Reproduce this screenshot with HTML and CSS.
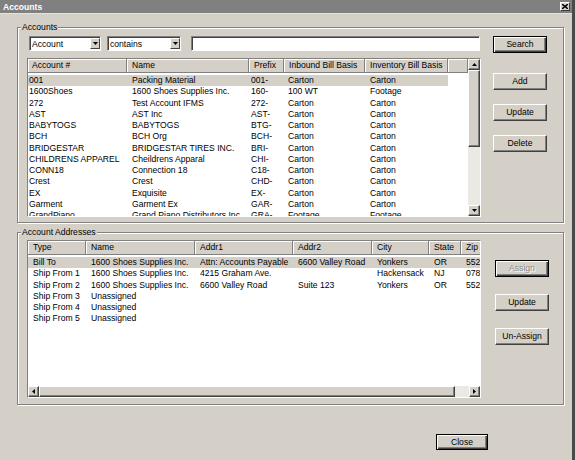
FILE: index.html
```html
<!DOCTYPE html>
<html lang="en">
  <head>
    <meta charset="UTF-8" />
    <title>Accounts</title>
    <link rel="stylesheet" href="styles.css">
  </head>
  <body>
    <div class="window">
      <div class="titlebar">
        <span>Accounts</span>
        <span class="close-box">
          <svg width="6" height="5" viewBox="0 0 6 5"><path d="M0 0L6 5M6 0L0 5" stroke="#000" stroke-width="1.4"/></svg>
        </span>
      </div>

      <div class="content">
        <!-- Accounts -->
        <div class="group accounts">
          <span class="group-label">Accounts</span>
          <div class="left">
            <div class="toolbar">
              <div class="combo combo-field">
                <span class="combo-text">Account</span>
                <span class="combo-btn"><svg width="5" height="3"><path d="M0 0h5L2.5 3z"/></svg></span>
              </div>
              <div class="combo combo-op">
                <span class="combo-text">contains</span>
                <span class="combo-btn"><svg width="5" height="3"><path d="M0 0h5L2.5 3z"/></svg></span>
              </div>
              <div class="textbox"></div>
            </div>

            <div class="grid accounts-grid">
              <div class="grid-main">
                <div class="grid-head">
                  <div class="hcell">Account #</div>
                  <div class="hcell">Name</div>
                  <div class="hcell">Prefix</div>
                  <div class="hcell">Inbound Bill Basis</div>
                  <div class="hcell">Inventory Bill Basis</div>
                  <div class="hcell filler"></div>
                </div>
                <div class="grid-body">
                  <div class="row selected"><div class="cell">001</div><div class="cell">Packing Material</div><div class="cell">001-</div><div class="cell">Carton</div><div class="cell">Carton</div></div>
                  <div class="row"><div class="cell">1600Shoes</div><div class="cell">1600 Shoes Supplies Inc.</div><div class="cell">160-</div><div class="cell">100 WT</div><div class="cell">Footage</div></div>
                  <div class="row"><div class="cell">272</div><div class="cell">Test Account IFMS</div><div class="cell">272-</div><div class="cell">Carton</div><div class="cell">Carton</div></div>
                  <div class="row"><div class="cell">AST</div><div class="cell">AST Inc</div><div class="cell">AST-</div><div class="cell">Carton</div><div class="cell">Carton</div></div>
                  <div class="row"><div class="cell">BABYTOGS</div><div class="cell">BABYTOGS</div><div class="cell">BTG-</div><div class="cell">Carton</div><div class="cell">Carton</div></div>
                  <div class="row"><div class="cell">BCH</div><div class="cell">BCH Org</div><div class="cell">BCH-</div><div class="cell">Carton</div><div class="cell">Carton</div></div>
                  <div class="row"><div class="cell">BRIDGESTAR</div><div class="cell">BRIDGESTAR TIRES INC.</div><div class="cell">BRI-</div><div class="cell">Carton</div><div class="cell">Carton</div></div>
                  <div class="row"><div class="cell">CHILDRENS APPAREL</div><div class="cell">Cheildrens Apparal</div><div class="cell">CHI-</div><div class="cell">Carton</div><div class="cell">Carton</div></div>
                  <div class="row"><div class="cell">CONN18</div><div class="cell">Connection 18</div><div class="cell">C18-</div><div class="cell">Carton</div><div class="cell">Carton</div></div>
                  <div class="row"><div class="cell">Crest</div><div class="cell">Crest</div><div class="cell">CHD-</div><div class="cell">Carton</div><div class="cell">Carton</div></div>
                  <div class="row"><div class="cell">EX</div><div class="cell">Exquisite</div><div class="cell">EX-</div><div class="cell">Carton</div><div class="cell">Carton</div></div>
                  <div class="row"><div class="cell">Garment</div><div class="cell">Garment Ex</div><div class="cell">GAR-</div><div class="cell">Carton</div><div class="cell">Carton</div></div>
                  <div class="row"><div class="cell">GrandPiano</div><div class="cell">Grand Piano Distributors Inc.</div><div class="cell">GRA-</div><div class="cell">Footage</div><div class="cell">Footage</div></div>
                </div>
              </div>
              <div class="vscroll">
                <span class="sb-btn"><svg width="5" height="3"><path d="M0 3h5L2.5 0z"/></svg></span>
                <span class="sb-thumb v-thumb"></span>
                <span class="sb-track"></span>
                <span class="sb-btn"><svg width="5" height="3"><path d="M0 0h5L2.5 3z"/></svg></span>
              </div>
            </div>
          </div>

          <div class="side">
            <div class="btn default">Search</div>
            <div class="btn btn-add">Add</div>
            <div class="btn btn-gap">Update</div>
            <div class="btn btn-gap">Delete</div>
          </div>
        </div>

        <!-- Account Addresses -->
        <div class="group addresses">
          <span class="group-label">Account Addresses</span>
          <div class="left">
            <div class="grid address-grid">
              <div class="grid-main">
                <div class="grid-head">
                  <div class="hcell">Type</div>
                  <div class="hcell">Name</div>
                  <div class="hcell">Addr1</div>
                  <div class="hcell">Addr2</div>
                  <div class="hcell">City</div>
                  <div class="hcell">State</div>
                  <div class="hcell">Zip</div>
                </div>
                <div class="grid-body">
                  <div class="row selected"><div class="cell">Bill To</div><div class="cell">1600 Shoes Supplies Inc.</div><div class="cell">Attn: Accounts Payable</div><div class="cell">6600 Valley Road</div><div class="cell">Yonkers</div><div class="cell">OR</div><div class="cell">552</div></div>
                  <div class="row"><div class="cell">Ship From 1</div><div class="cell">1600 Shoes Supplies Inc.</div><div class="cell">4215 Graham Ave.</div><div class="cell"></div><div class="cell">Hackensack</div><div class="cell">NJ</div><div class="cell">078</div></div>
                  <div class="row"><div class="cell">Ship From 2</div><div class="cell">1600 Shoes Supplies Inc.</div><div class="cell">6600 Valley Road</div><div class="cell">Suite 123</div><div class="cell">Yonkers</div><div class="cell">OR</div><div class="cell">552</div></div>
                  <div class="row"><div class="cell">Ship From 3</div><div class="cell">Unassigned</div></div>
                  <div class="row"><div class="cell">Ship From 4</div><div class="cell">Unassigned</div></div>
                  <div class="row"><div class="cell">Ship From 5</div><div class="cell">Unassigned</div></div>
                </div>
                <div class="hscroll">
                  <span class="sb-btn h-btn"><svg width="3" height="5"><path d="M3 0v5L0 2.5z"/></svg></span>
                  <span class="sb-thumb h-thumb"></span>
                  <span class="sb-track"></span>
                  <span class="sb-btn h-btn"><svg width="3" height="5"><path d="M0 0v5L3 2.5z"/></svg></span>
                </div>
              </div>
            </div>
          </div>

          <div class="side">
            <div class="btn default disabled btn-assign">Assign</div>
            <div class="btn btn-gap2">Update</div>
            <div class="btn btn-gap2">Un-Assign</div>
          </div>
        </div>

        <div class="footer">
          <div class="btn default btn-close">Close</div>
        </div>
      </div>
    </div>
  </body>
</html>
```

FILE: styles.css
```css
body {
  margin: 0;
  font-family: "Liberation Sans", Arial, sans-serif;
  font-size: 8.6px;
  color: #000;
}
.window {
  width: 575px;
  height: 460px;
  box-sizing: border-box;
  background: #d4d0c8;
  border-right: 3px solid #4a4a4a;
  display: flex;
  flex-direction: column;
  overflow: hidden;
}
.titlebar {
  height: 13px;
  background: #808080;
  color: #fff;
  font-weight: bold;
  display: flex;
  align-items: center;
  justify-content: space-between;
  padding: 0 2px 0 3px;
  border-bottom: 1px solid #e6e3dc;
}
.close-box {
  width: 10px;
  height: 9px;
  box-sizing: border-box;
  background: #d4d0c8;
  border: 1px solid;
  border-color: #fff #404040 #404040 #fff;
  display: flex;
  align-items: center;
  justify-content: center;
}
.content {
  flex: 1;
  padding: 13px 0 0 17px;
  display: flex;
  flex-direction: column;
}

/* group boxes */
.group {
  position: relative;
  width: 547px;
  box-sizing: border-box;
  border: 1px solid #808080;
  box-shadow: 1px 1px 0 #fff, inset 1px 1px 0 #fff;
  display: flex;
}
.group-label {
  position: absolute;
  top: -6px;
  left: 3px;
  padding: 0 1px;
  line-height: 11px;
  background: #d4d0c8;
}
.accounts {
  padding: 8px 0 5px 9px;
  gap: 12px;
}
.addresses {
  margin-top: 9px;
  padding: 7px 0 6px 9px;
  gap: 14px;
}
.left {
  width: 454px;
  display: flex;
  flex-direction: column;
}
.side {
  width: 54px;
  display: flex;
  flex-direction: column;
}

/* search row */
.toolbar {
  display: flex;
  height: 15px;
  margin-bottom: 7px;
  padding-left: 2px;
}
.combo,
.textbox {
  box-sizing: border-box;
  height: 15px;
  background: #fff;
  border: 1px solid;
  border-color: #808080 #fff #fff #808080;
  box-shadow: inset 1px 1px 0 #404040;
}
.combo {
  display: flex;
  align-items: flex-start;
}
.combo-field {
  width: 72px;
  margin-right: 6px;
}
.combo-op {
  width: 74px;
  margin-right: 10px;
}
.textbox {
  width: 289px;
}
.combo-text {
  flex: 1;
  padding: 1px 0 0 2px;
  line-height: 12px;
}
.combo-btn {
  width: 10px;
  height: 11px;
  margin-top: 1px;
  box-sizing: border-box;
  background: #d4d0c8;
  border: 1px solid;
  border-color: #fff #404040 #404040 #fff;
  display: flex;
  align-items: center;
  justify-content: center;
}

/* list grids */
.grid {
  box-sizing: border-box;
  background: #fff;
  border: 1px solid;
  border-color: #808080 #fff #fff #808080;
  display: flex;
  overflow: hidden;
}
.accounts-grid {
  height: 159px;
}
.address-grid {
  height: 158px;
}
.grid-main {
  flex: 1;
  min-width: 0;
  display: flex;
  flex-direction: column;
  overflow: hidden;
}
.grid-head {
  display: flex;
  height: 14px;
  flex: none;
}
.hcell {
  flex: none;
  box-sizing: border-box;
  height: 14px;
  padding-left: 5px;
  line-height: 13px;
  background: #d4d0c8;
  border-right: 1px solid #808080;
  border-bottom: 1px solid #808080;
  box-shadow: inset 1px 1px 0 #fff;
  white-space: nowrap;
  overflow: hidden;
}
.hcell.filler {
  flex: 1;
}
.grid-body {
  flex: 1;
  padding-top: 2px;
  overflow: hidden;
}
.row {
  display: flex;
  height: 11.25px;
  line-height: 11.25px;
  width: max-content;
}
.row.selected {
  background: #d4d0c8;
}
.cell {
  flex: none;
  box-sizing: border-box;
  padding-left: 4px;
  white-space: nowrap;
  overflow: hidden;
}

.accounts-grid .hcell:nth-child(1) { width: 99px; padding-left: 4px; }
.accounts-grid .hcell:nth-child(2) { width: 122px; }
.accounts-grid .hcell:nth-child(3) { width: 35px; }
.accounts-grid .hcell:nth-child(4) { width: 81px; }
.accounts-grid .hcell:nth-child(5) { width: 83px; }
.accounts-grid .cell:nth-child(1) { width: 99px; padding-left: 1px; }
.accounts-grid .cell:nth-child(2) { width: 122px; padding-left: 5px; }
.accounts-grid .cell:nth-child(3) { width: 35px; padding-left: 2px; }
.accounts-grid .cell:nth-child(4) { width: 81px; }
.accounts-grid .cell:nth-child(5) { width: 83px; padding-left: 5px; }

.address-grid .hcell,
.address-grid .cell {
  padding-left: 5px;
}
.address-grid .hcell:nth-child(1),
.address-grid .cell:nth-child(1) { width: 58px; }
.address-grid .hcell:nth-child(2),
.address-grid .cell:nth-child(2) { width: 109px; }
.address-grid .hcell:nth-child(3),
.address-grid .cell:nth-child(3) { width: 98px; }
.address-grid .hcell:nth-child(4),
.address-grid .cell:nth-child(4) { width: 79px; }
.address-grid .hcell:nth-child(5),
.address-grid .cell:nth-child(5) { width: 57px; }
.address-grid .hcell:nth-child(6),
.address-grid .cell:nth-child(6) { width: 32px; }
.address-grid .hcell:nth-child(7),
.address-grid .cell:nth-child(7) { width: 40px; }
.address-grid .row {
  width: 473px;
}

/* scroll bars */
.vscroll {
  width: 12px;
  display: flex;
  flex-direction: column;
  background: #d4d0c8;
}
.hscroll {
  height: 11px;
  flex: none;
  display: flex;
  background: #d4d0c8;
}
.sb-btn,
.sb-thumb {
  flex: none;
  box-sizing: border-box;
  background: #d4d0c8;
  border: 1px solid;
  border-color: #fff #404040 #404040 #fff;
  box-shadow: inset -1px -1px 0 #808080;
}
.sb-btn {
  height: 11px;
  display: flex;
  align-items: center;
  justify-content: center;
}
.h-btn {
  width: 11px;
}
.v-thumb {
  height: 77px;
}
.h-thumb {
  width: 416px;
}
.sb-track {
  flex: 1;
  background: #ebe9e4;
}

/* buttons */
.btn {
  box-sizing: border-box;
  width: 54px;
  height: 17px;
  line-height: 15px;
  text-align: center;
  background: #d4d0c8;
  border: 1px solid;
  border-color: #fff #404040 #404040 #fff;
  box-shadow: inset -1px -1px 0 #808080;
}
.btn.default {
  border-color: #000;
  box-shadow: inset 1px 1px 0 #fff, inset -1px -1px 0 #404040, inset -2px -2px 0 #808080;
}
.btn.disabled {
  color: #8c8a86;
  text-shadow: 1px 1px 0 #fff;
}
.btn-add {
  margin-top: 20px;
}
.btn-gap {
  margin-top: 14px;
}
.btn-assign {
  margin-top: 20px;
}
.btn-gap2 {
  margin-top: 17px;
}
.footer {
  margin-top: 29px;
  padding-left: 419px;
}
.btn-close {
  width: 52px;
  height: 16px;
  line-height: 14px;
}
```
